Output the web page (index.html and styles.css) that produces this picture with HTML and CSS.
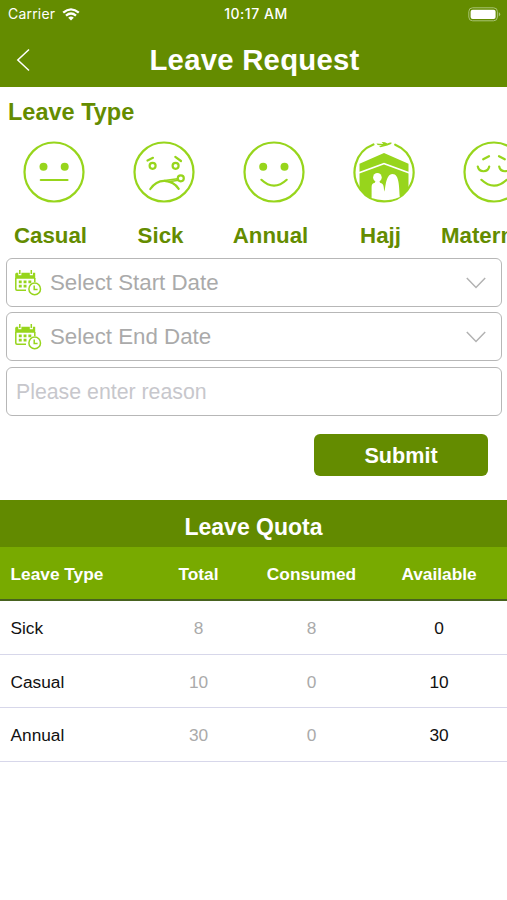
FILE: index.html
```html
<!DOCTYPE html>
<html lang="en">
<head>
<meta charset="utf-8">
<title>Leave Request</title>
<link rel="stylesheet" href="styles.css">
</head>
<body>
<header class="header">
  <div class="status">
    <div class="carrier"><span>Carrier</span>
      <svg width="18" height="13" viewBox="0 0 18 13" fill="none" stroke="#fff" stroke-width="2.3"><path d="M1.2 4.7Q9-2 16.8 4.7M4 7.7Q9 3.4 14 7.7"/><path d="M6.2 9.7Q9 7.5 11.8 9.7L9 12.6Z" fill="#fff" stroke="none"/></svg>
    </div>
    <span class="time">10:17 AM</span>
    <svg class="battery" width="33" height="15" viewBox="0 0 33 15"><rect x=".8" y=".8" width="28.6" height="13" rx="3.8" fill="none" stroke="#a9c374" stroke-width="1"/><rect x="2.6" y="2.7" width="25" height="9.2" rx="2" fill="#fff"/><path d="M30.8 5.2q1.4.7 1.4 2.1t-1.4 2.1z" fill="#a9c374"/></svg>
  </div>
  <div class="nav">
    <svg class="back" width="14" height="24" viewBox="0 0 14 24" fill="none" stroke="#fff" stroke-width="1.5"><path d="M13 1.5 1.8 12 13 22.5"/></svg>
    <h1>Leave Request</h1>
  </div>
</header>
<main>
  <h2 class="section-title">Leave Type</h2>
  <div class="types">
    <div class="type">
      <svg viewBox="0 0 62 62"><circle class="ln" cx="31" cy="31" r="29.5"/><circle class="fl" cx="20.5" cy="25.8" r="4"/><circle class="fl" cx="41.7" cy="25.8" r="4"/><path class="ln" d="M17.8 39H44.5"/></svg>
      <span>Casual</span>
    </div>
    <div class="type">
      <svg viewBox="0 0 62 62"><circle class="ln" cx="31" cy="31" r="29.5"/><circle class="ln" cx="19.6" cy="24.8" r="3"/><circle class="ln" cx="42.6" cy="24.8" r="3"/><path class="ln" d="M14.5 19.5 20 16.8M42.3 15.8 48 20M17.3 48C22.5 40.4 28 39.7 31.5 39.8 39 40.3 43 43.5 45.7 47.8"/><path class="ln slim" d="M31.5 39.6 44.6 37.7M36 40.8 45.2 39.2"/><circle class="ln" cx="47.8" cy="37.3" r="3"/></svg>
      <span>Sick</span>
    </div>
    <div class="type">
      <svg viewBox="0 0 62 62"><circle class="ln" cx="31" cy="31" r="29.5"/><circle class="fl" cx="20.2" cy="25.8" r="4"/><circle class="fl" cx="41.5" cy="25.8" r="4"/><path class="ln" d="M18.4 38.8Q31 50.5 43.7 38.8"/></svg>
      <span>Annual</span>
    </div>
    <div class="type">
      <svg viewBox="0 0 62 62"><path class="ln" d="M20.4 3.5A29.5 29.5 0 1 0 42.2 3.7"/><path class="fl" d="M6.5 22.8 31 12 55.5 22.8V30.8L31 21.8 6.5 30.8Z"/><path class="fl" d="M6.5 32.6 31 23.6 55.5 32.6V47A29.5 29.5 0 0 1 6.5 47Z"/><circle cx="24.4" cy="36.4" r="4.3" fill="#fff"/><path d="M18.6 57V46Q18.6 42.4 21.8 41.8L23 39H26L27 41.8Q30.2 42.4 30.7 46L31.2 50.5C32.6 50 32 33 39.5 33 46.5 33 46 46 46.8 56Q38 59.5 31 59.2T18.6 57Z" fill="#fff"/><path class="fl" d="M23.5 2.4 30.3 3 28.6 1 32 1.2 34.5 2.6Q37 1.2 38.8 1.8 38.6 3.4 34.4 4.5L27.5 6.3 26 5.6 29 4.5 24.6 4.1Z"/></svg>
      <span>Hajj</span>
    </div>
    <div class="type">
      <svg viewBox="0 0 62 62"><circle class="ln" cx="31" cy="31" r="29.5"/><path class="ln" d="M14.8 25.5A5.8 5.8 0 0 0 26.2 25.5M36.2 25.5A5.8 5.8 0 0 0 47.6 25.5M20.2 18.3 26 15.2M36 15.2 41.8 18.3M18.4 38.8Q31 50.5 43.7 38.8"/></svg>
      <span>Maternity</span>
    </div>
  </div>
  <div class="form">
    <div class="field">
      <svg class="cal" viewBox="0 0 28 28"><path d="M2.2 3.8H4.3V6.3H7.4V3.8H15.8V6.3H18.9V3.8H21.2V9.8H1.2V4.8Z" fill="#97d51c"/><path class="thin" d="M5.8 1V5M17.3 1V5M1.8 9V20Q1.8 21.2 3 21.2H12M20.8 9V13"/><path d="M4.8 12.9H17.8M4.8 17.2H14" fill="none" stroke="#97d51c" stroke-width="2.7" stroke-dasharray="2.9 1.9"/><circle class="thin" cx="20.7" cy="19.9" r="5.8"/><path class="thin" d="M20.2 16.5V20.4H23.6"/></svg>
      <span>Select Start Date</span>
      <svg class="chev" viewBox="0 0 20 12"><path d="M.8 1 10 10.4 19.2 1"/></svg>
    </div>
    <div class="field">
      <svg class="cal" viewBox="0 0 28 28"><path d="M2.2 3.8H4.3V6.3H7.4V3.8H15.8V6.3H18.9V3.8H21.2V9.8H1.2V4.8Z" fill="#97d51c"/><path class="thin" d="M5.8 1V5M17.3 1V5M1.8 9V20Q1.8 21.2 3 21.2H12M20.8 9V13"/><path d="M4.8 12.9H17.8M4.8 17.2H14" fill="none" stroke="#97d51c" stroke-width="2.7" stroke-dasharray="2.9 1.9"/><circle class="thin" cx="20.7" cy="19.9" r="5.8"/><path class="thin" d="M20.2 16.5V20.4H23.6"/></svg>
      <span>Select End Date</span>
      <svg class="chev" viewBox="0 0 20 12"><path d="M.8 1 10 10.4 19.2 1"/></svg>
    </div>
    <input class="field reason" type="text" placeholder="Please enter reason">
    <button class="submit" type="button">Submit</button>
  </div>
  <section class="quota">
    <h2>Leave Quota</h2>
    <div class="row head"><span>Leave Type</span><span>Total</span><span>Consumed</span><span>Available</span></div>
    <div class="row"><span>Sick</span><span>8</span><span>8</span><span>0</span></div>
    <div class="row"><span>Casual</span><span>10</span><span>0</span><span>10</span></div>
    <div class="row"><span>Annual</span><span>30</span><span>0</span><span>30</span></div>
  </section>
</main>
</body>
</html>
```
FILE: styles.css
```css
* { box-sizing: border-box; }
body {
  margin: 0;
  height: 900px;
  overflow: hidden;
  background: #fff;
  font-family: "Liberation Sans", Arial, sans-serif;
}
h1, h2 { margin: 0; font-weight: bold; }
svg { display: block; flex: none; }

.header { height: 87px; background: #648c00; color: #fff; }
.status {
  display: grid;
  grid-template-columns: 1fr auto 1fr;
  align-items: center;
  height: 28px;
  padding: 0 6px 0 8px;
  font: 14px/28px Inter, sans-serif;
}
.carrier { display: flex; align-items: center; gap: 7px; letter-spacing: 0.2px; }
.time { padding-left: 3px; font-weight: 500; letter-spacing: 0.55px; }
.battery { justify-self: end; }
.nav {
  display: grid;
  grid-template-columns: 44px 1fr 42px;
  align-items: center;
  height: 64px;
}
.back { margin-left: 16px; }
.nav h1 { text-align: center; font-size: 29.3px; letter-spacing: 0.25px; }

.section-title {
  height: 50px;
  padding-left: 8px;
  color: #648c00;
  font-size: 23.5px;
  line-height: 50px;
}
.types { display: flex; height: 121px; margin-left: -2px; overflow: hidden; }
.type {
  display: flex;
  flex: none;
  flex-direction: column;
  align-items: center;
  width: 110px;
  padding-top: 3px;
  color: #648c00;
  font-size: 22.3px;
  font-weight: bold;
  line-height: 28px;
}
.type svg { width: 62px; height: 62px; margin: 0.5px 0 19.5px 1px; }
.type span { margin-right: 5px; }
.ln { fill: none; stroke: #97d51c; stroke-width: 2.2; stroke-linecap: round; }
.slim { stroke-width: 1.5; }
.fl { fill: #97d51c; }

.form { display: flex; flex-direction: column; padding: 0 5px 0 6px; }
.field {
  display: flex;
  align-items: center;
  width: 100%;
  height: 49px;
  margin-bottom: 5px;
  padding: 0 15px 0 7px;
  border: 1.5px solid #b7b7b7;
  border-radius: 6px;
  background: #fff;
  color: #aaa;
  font-size: 22.3px;
}
.field span { flex: 1; margin-left: 8px; }
.cal { width: 28px; height: 28px; }
.thin { fill: none; stroke: #97d51c; stroke-width: 1.5; }
.chev { width: 20px; height: 12px; fill: none; stroke: #b2b2b2; stroke-width: 1.5; }
.reason {
  margin-top: 1px;
  padding: 1px 8px 0 9px;
  font-family: inherit;
  font-size: 21.3px;
  outline: none;
}
.reason::placeholder { color: #c7c7cc; opacity: 1; }
.submit {
  align-self: flex-end;
  width: 174px;
  height: 42px;
  margin: 13px 14px 24px 0;
  padding: 1px 0 0;
  border: 0;
  border-radius: 6px;
  background: #648c00;
  color: #fff;
  font: bold 21.6px/41px "Liberation Sans", Arial, sans-serif;
}

.quota h2 {
  height: 47px;
  background: #628a00;
  color: #fff;
  font-size: 23px;
  line-height: 54px;
  text-align: center;
}
.row {
  display: grid;
  grid-template-columns: 142px 113px 113px 1fr;
  align-items: center;
  height: 53.7px;
  padding-top: 2px;
  border-bottom: 1.5px solid #d7d7ea;
  color: #aaa;
  font-size: 17.3px;
  text-align: center;
}
.row span:first-child { padding-left: 10.5px; color: #111; text-align: left; }
.row span:last-child { padding-left: 3px; color: #111; }
.row.head {
  height: 54px;
  border-bottom: 2px solid #47621f;
  background: #78aa00;
  font-weight: bold;
}
.row.head span { color: #fff; }
```
